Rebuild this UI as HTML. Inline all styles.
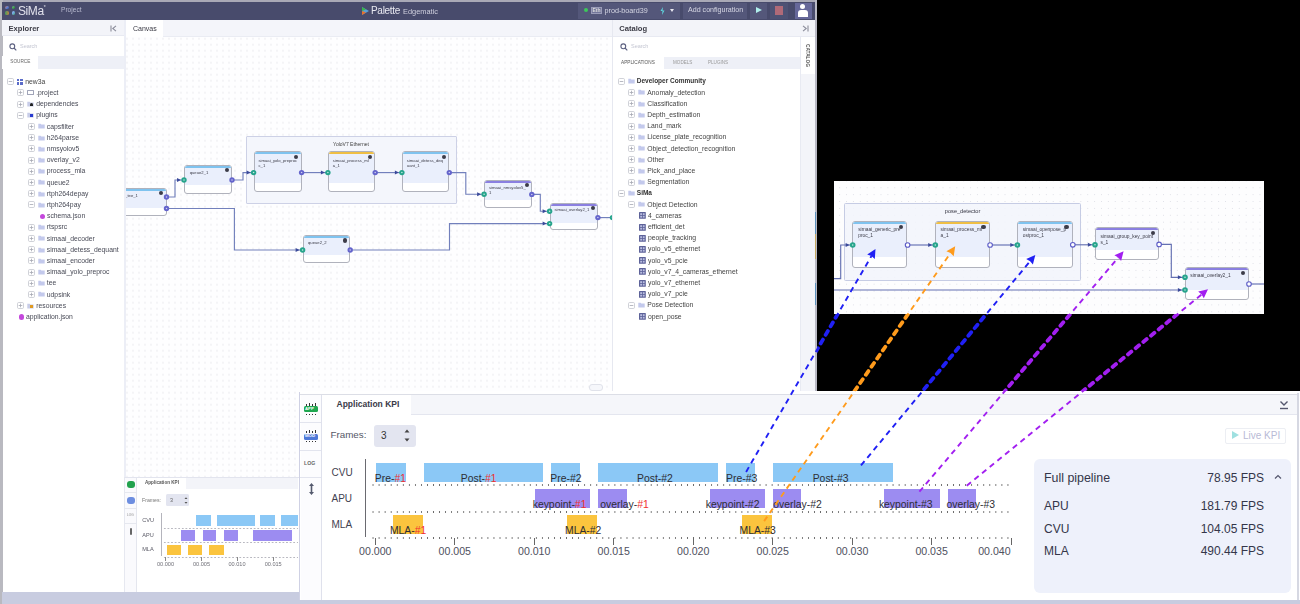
<!DOCTYPE html><html><head><meta charset="utf-8"><style>
*{margin:0;padding:0;box-sizing:border-box}
html,body{width:1300px;height:604px;overflow:hidden;background:#000;font-family:"Liberation Sans",sans-serif}
.a{position:absolute}
svg{display:block}
.t{position:absolute;white-space:nowrap;line-height:1}
.dots{background-color:#fefeff;background-image:radial-gradient(circle,#ececf1 0.55px,transparent 0.9px);background-size:6px 6px;background-position:-2px -0.3px}
.dots2{background-color:#fdfdfe;background-image:radial-gradient(circle,#e0e1e8 0.65px,transparent 0.95px);background-size:6.9px 6.9px;background-position:2.2px 3.3px}
.bl{position:absolute;font-size:10.4px;line-height:1;color:#2e2e34;white-space:nowrap}
.tr{position:absolute;white-space:nowrap;font-size:6.8px;color:#484a56;line-height:1}
.exp{position:absolute;width:6px;height:6px;border:0.7px solid #b4b6c0;border-radius:1px;background:#fff}
.fold{position:absolute;width:6px;height:5px;background:#bcc3ea;border-radius:0.6px}
.node{position:absolute;border:1px solid #b0b2bc;border-radius:3px;background:#fff;overflow:hidden}
.node .lt{position:absolute;left:0;top:0;right:0;background:#eaeffc}
.node .st{position:absolute;left:0;top:0;right:0;height:2px}
.ntx{position:absolute;font-size:5.3px;line-height:6.2px;color:#3a3a46;white-space:nowrap}
</style></head><body>
<div class="a" style="left:0;top:0;width:817px;height:604px;background:#fff;overflow:hidden;filter:blur(0.4px)">
<div class="a" style="left:0;top:0;width:817px;height:2px;background:#a9a9b6"></div>
<div class="a" style="left:0;top:0;width:2.5px;height:604px;background:#b9b9c0"></div>
<div class="a" style="left:815px;top:0;width:2px;height:392px;background:#b9b9c4"></div>
<div class="a" style="left:815.3px;top:211.5px;width:1.2px;height:22.5px;background:#5a90bc"></div>
<div class="a" style="left:815.3px;top:234px;width:1.2px;height:25px;background:#c4a860"></div>
<div class="a" style="left:815.3px;top:282.5px;width:1.2px;height:22.5px;background:#5a90bc"></div>
<div class="a" style="left:2px;top:2px;width:813px;height:18px;background:#484b6c"></div>
<div class="a" style="left:5.4px;top:5.7px;width:3.8px;height:3.8px;border-radius:1.6px;background:linear-gradient(135deg,#c07060,#6080d0 55%,#3050a0)"></div>
<div class="a" style="left:11.6px;top:5.7px;width:3.8px;height:3.8px;border-radius:1.6px;background:linear-gradient(135deg,#70c080,#40a050 60%,#206030)"></div>
<div class="a" style="left:5.4px;top:11.4px;width:3.8px;height:3.8px;border-radius:1.6px;background:linear-gradient(90deg,#40a060,#c08040)"></div>
<div class="a" style="left:11.6px;top:11.4px;width:3.8px;height:3.8px;border-radius:1.6px;background:linear-gradient(135deg,#90c0f0,#70a8e0 50%,#40a050)"></div>
<div class="t" style="left:18px;top:5px;font-size:12px;color:#e2e2ec;letter-spacing:-0.4px">SiMa<span style="font-size:5px;vertical-align:top">*</span></div>
<div class="t" style="left:61px;top:7px;font-size:6.6px;color:#b9bbd0">Project</div>
<div class="a" style="left:361px;top:6px"><svg width="9" height="10"><path d="M1 1 L8 5 L1 9 Z" fill="#5aa0d8"/><path d="M1 1 L5 3.5 L1 5 Z" fill="#39b54a"/><path d="M1 5 L5 6.5 L1 9 Z" fill="#e8702a"/></svg></div>
<div class="t" style="left:371px;top:5.5px;font-size:10px;color:#e8e8f0;letter-spacing:-0.3px">Palette</div>
<div class="t" style="left:403px;top:8px;font-size:7.4px;color:#d0d0de">Edgematic</div>
<div class="a" style="left:577.5px;top:3px;width:102.5px;height:15.5px;background:#54577a"></div>
<div class="a" style="left:583.5px;top:8px;width:4px;height:4px;border-radius:2px;background:#3cc85a"></div>
<div class="a" style="left:591px;top:6.5px;width:10.5px;height:7.5px;background:#73769a;border:0.6px solid #9a9cb8"></div>
<div class="t" style="left:592.5px;top:8px;font-size:5px;color:#ddd;font-weight:bold">Eth</div>
<div class="t" style="left:604.5px;top:6.5px;font-size:7.2px;color:#d6d7e4">prod-board39</div>
<div class="a" style="left:660px;top:6.5px"><svg width="5" height="8"><path d="M3 0 L0.5 4 L2.5 4 L2 8 L4.5 3.5 L2.5 3.5 Z" fill="#5fd8e0"/></svg></div>
<div class="a" style="left:669.5px;top:8.5px;width:0;height:0;border-top:3.5px solid #e8e8f0;border-left:2.5px solid transparent;border-right:2.5px solid transparent"></div>
<div class="a" style="left:683px;top:3px;width:64px;height:15.5px;background:#54577a"></div>
<div class="t" style="left:688px;top:6.5px;font-size:7.1px;color:#d6d7e4">Add configuration</div>
<div class="a" style="left:750px;top:3px;width:17px;height:15.5px;background:#54577a"></div>
<div class="a" style="left:756px;top:7px;width:0;height:0;border-left:6px solid #b0f0ec;border-top:3.7px solid transparent;border-bottom:3.7px solid transparent"></div>
<div class="a" style="left:770px;top:3px;width:18px;height:15.5px;background:#4e5274"></div>
<div class="a" style="left:775px;top:6px;width:8px;height:8.5px;background:#b06a78"></div>
<div class="a" style="left:794.5px;top:2.5px;width:17px;height:16px;background:#66689a"></div>
<div class="a" style="left:800px;top:4px;width:5px;height:5px;border-radius:2.5px;background:#fff"></div>
<div class="a" style="left:797.5px;top:10px;width:10px;height:7px;border-radius:3px 3px 0 0;background:#fff"></div>
<div class="a" style="left:2px;top:20px;width:122px;height:16px;background:#f3f4f9;border-bottom:1px solid #e8eaf2"></div>
<div class="t" style="left:8.5px;top:24.8px;font-size:7.6px;font-weight:bold;color:#3c3c46">Explorer</div>
<svg class="a" style="left:109.5px;top:25px" width="7" height="7"><path d="M1 0.5 V6.5 M6 0.8 L2.8 3.5 L6 6.2" stroke="#8a8c9a" stroke-width="1.1" fill="none"/></svg>
<div class="a" style="left:124px;top:20px;width:2px;height:572px;background:#eceef6"></div>
<div class="a" style="left:9px;top:43px"><svg width="8" height="8"><circle cx="3.3" cy="3.3" r="2.4" stroke="#5c6080" stroke-width="1.1" fill="none"/><path d="M5 5 L7.3 7.3" stroke="#5c6080" stroke-width="1.2"/></svg></div>
<div class="t" style="left:20px;top:44px;font-size:5.5px;color:#c4c6d2">Search</div>
<div class="a" style="left:2px;top:55.5px;width:122px;height:13.5px;background:#eef0f7"></div>
<div class="a" style="left:2px;top:55.5px;width:36px;height:13.5px;background:#fff"></div>
<div class="t" style="left:10.3px;top:60px;font-size:4.7px;color:#666">SOURCE</div>
<svg class="a" style="left:6.8px;top:78.1px" width="7" height="7"><rect x="0.5" y="0.5" width="6" height="6" rx="1.2" fill="#fff" stroke="#c4c6ce" stroke-width="0.8"/><path d="M1.7 3.5 H5.3" stroke="#a6a8b2" stroke-width="0.8"/></svg>
<div class="a" style="left:16.5px;top:78.6px;width:2.8px;height:2.8px;background:#5b6cc8"></div>
<div class="a" style="left:20px;top:78.6px;width:2.8px;height:2.8px;background:#5b6cc8"></div>
<div class="a" style="left:16.5px;top:82.1px;width:2.8px;height:2.8px;background:#5b6cc8"></div>
<div class="a" style="left:20px;top:82.1px;width:2.8px;height:2.8px;background:#5b6cc8"></div>
<div class="tr" style="left:25.2px;top:78.69999999999999px;color:#444">new3a</div>
<svg class="a" style="left:17px;top:89.3px" width="7" height="7"><rect x="0.5" y="0.5" width="6" height="6" rx="1.2" fill="#fff" stroke="#c4c6ce" stroke-width="0.8"/><path d="M1.7 3.5 H5.3" stroke="#a6a8b2" stroke-width="0.8"/><path d="M3.5 1.7 V5.3" stroke="#a6a8b2" stroke-width="0.8"/></svg>
<div class="a" style="left:27px;top:90.3px;width:6.5px;height:5px;border:0.7px solid #a0a4b8;border-radius:0.6px"></div>
<div class="tr" style="left:36.2px;top:89.89999999999999px">.project</div>
<svg class="a" style="left:17px;top:100.5px" width="7" height="7"><rect x="0.5" y="0.5" width="6" height="6" rx="1.2" fill="#fff" stroke="#c4c6ce" stroke-width="0.8"/><path d="M1.7 3.5 H5.3" stroke="#a6a8b2" stroke-width="0.8"/><path d="M3.5 1.7 V5.3" stroke="#a6a8b2" stroke-width="0.8"/></svg>
<svg class="a" style="left:27px;top:101.0px" width="7" height="6"><path d="M0.3 0.8 H2.6 L3.3 1.6 H6.7 V5.6 H0.3 Z" fill="#c8cde8"/></svg>
<div class="a" style="left:29.5px;top:102.5px;width:3px;height:3.5px;background:#222;border-radius:1.5px 1.5px 0 0"></div>
<div class="tr" style="left:36.2px;top:101.1px">dependencies</div>
<svg class="a" style="left:17px;top:111.69999999999999px" width="7" height="7"><rect x="0.5" y="0.5" width="6" height="6" rx="1.2" fill="#fff" stroke="#c4c6ce" stroke-width="0.8"/><path d="M1.7 3.5 H5.3" stroke="#a6a8b2" stroke-width="0.8"/></svg>
<svg class="a" style="left:27px;top:112.19999999999999px" width="7" height="6"><path d="M0.3 0.8 H2.6 L3.3 1.6 H6.7 V5.6 H0.3 Z" fill="#c8cde8"/></svg>
<div class="a" style="left:30px;top:114.19999999999999px;width:3px;height:3px;background:#2a3cd0"></div>
<div class="tr" style="left:36.2px;top:112.29999999999998px">plugins</div>
<svg class="a" style="left:28px;top:122.89999999999999px" width="7" height="7"><rect x="0.5" y="0.5" width="6" height="6" rx="1.2" fill="#fff" stroke="#c4c6ce" stroke-width="0.8"/><path d="M1.7 3.5 H5.3" stroke="#a6a8b2" stroke-width="0.8"/><path d="M3.5 1.7 V5.3" stroke="#a6a8b2" stroke-width="0.8"/></svg>
<svg class="a" style="left:38.3px;top:123.39999999999999px" width="7" height="6"><path d="M0.3 0.8 H2.6 L3.3 1.6 H6.7 V5.6 H0.3 Z" fill="#c3c9ec"/></svg>
<div class="tr" style="left:46.8px;top:123.49999999999999px">capsfilter</div>
<svg class="a" style="left:28px;top:134.1px" width="7" height="7"><rect x="0.5" y="0.5" width="6" height="6" rx="1.2" fill="#fff" stroke="#c4c6ce" stroke-width="0.8"/><path d="M1.7 3.5 H5.3" stroke="#a6a8b2" stroke-width="0.8"/><path d="M3.5 1.7 V5.3" stroke="#a6a8b2" stroke-width="0.8"/></svg>
<svg class="a" style="left:38.3px;top:134.6px" width="7" height="6"><path d="M0.3 0.8 H2.6 L3.3 1.6 H6.7 V5.6 H0.3 Z" fill="#c3c9ec"/></svg>
<div class="tr" style="left:46.8px;top:134.7px">h264parse</div>
<svg class="a" style="left:28px;top:145.29999999999998px" width="7" height="7"><rect x="0.5" y="0.5" width="6" height="6" rx="1.2" fill="#fff" stroke="#c4c6ce" stroke-width="0.8"/><path d="M1.7 3.5 H5.3" stroke="#a6a8b2" stroke-width="0.8"/><path d="M3.5 1.7 V5.3" stroke="#a6a8b2" stroke-width="0.8"/></svg>
<svg class="a" style="left:38.3px;top:145.79999999999998px" width="7" height="6"><path d="M0.3 0.8 H2.6 L3.3 1.6 H6.7 V5.6 H0.3 Z" fill="#c3c9ec"/></svg>
<div class="tr" style="left:46.8px;top:145.89999999999998px">nmsyolov5</div>
<svg class="a" style="left:28px;top:156.5px" width="7" height="7"><rect x="0.5" y="0.5" width="6" height="6" rx="1.2" fill="#fff" stroke="#c4c6ce" stroke-width="0.8"/><path d="M1.7 3.5 H5.3" stroke="#a6a8b2" stroke-width="0.8"/><path d="M3.5 1.7 V5.3" stroke="#a6a8b2" stroke-width="0.8"/></svg>
<svg class="a" style="left:38.3px;top:157.0px" width="7" height="6"><path d="M0.3 0.8 H2.6 L3.3 1.6 H6.7 V5.6 H0.3 Z" fill="#c3c9ec"/></svg>
<div class="tr" style="left:46.8px;top:157.1px">overlay_v2</div>
<svg class="a" style="left:28px;top:167.7px" width="7" height="7"><rect x="0.5" y="0.5" width="6" height="6" rx="1.2" fill="#fff" stroke="#c4c6ce" stroke-width="0.8"/><path d="M1.7 3.5 H5.3" stroke="#a6a8b2" stroke-width="0.8"/><path d="M3.5 1.7 V5.3" stroke="#a6a8b2" stroke-width="0.8"/></svg>
<svg class="a" style="left:38.3px;top:168.2px" width="7" height="6"><path d="M0.3 0.8 H2.6 L3.3 1.6 H6.7 V5.6 H0.3 Z" fill="#c3c9ec"/></svg>
<div class="tr" style="left:46.8px;top:168.29999999999998px">process_mla</div>
<svg class="a" style="left:28px;top:178.89999999999998px" width="7" height="7"><rect x="0.5" y="0.5" width="6" height="6" rx="1.2" fill="#fff" stroke="#c4c6ce" stroke-width="0.8"/><path d="M1.7 3.5 H5.3" stroke="#a6a8b2" stroke-width="0.8"/><path d="M3.5 1.7 V5.3" stroke="#a6a8b2" stroke-width="0.8"/></svg>
<svg class="a" style="left:38.3px;top:179.39999999999998px" width="7" height="6"><path d="M0.3 0.8 H2.6 L3.3 1.6 H6.7 V5.6 H0.3 Z" fill="#c3c9ec"/></svg>
<div class="tr" style="left:46.8px;top:179.49999999999997px">queue2</div>
<svg class="a" style="left:28px;top:190.1px" width="7" height="7"><rect x="0.5" y="0.5" width="6" height="6" rx="1.2" fill="#fff" stroke="#c4c6ce" stroke-width="0.8"/><path d="M1.7 3.5 H5.3" stroke="#a6a8b2" stroke-width="0.8"/><path d="M3.5 1.7 V5.3" stroke="#a6a8b2" stroke-width="0.8"/></svg>
<svg class="a" style="left:38.3px;top:190.6px" width="7" height="6"><path d="M0.3 0.8 H2.6 L3.3 1.6 H6.7 V5.6 H0.3 Z" fill="#c3c9ec"/></svg>
<div class="tr" style="left:46.8px;top:190.7px">rtph264depay</div>
<svg class="a" style="left:28px;top:201.29999999999998px" width="7" height="7"><rect x="0.5" y="0.5" width="6" height="6" rx="1.2" fill="#fff" stroke="#c4c6ce" stroke-width="0.8"/><path d="M1.7 3.5 H5.3" stroke="#a6a8b2" stroke-width="0.8"/></svg>
<svg class="a" style="left:38.3px;top:201.79999999999998px" width="7" height="6"><path d="M0.3 0.8 H2.6 L3.3 1.6 H6.7 V5.6 H0.3 Z" fill="#c3c9ec"/></svg>
<div class="tr" style="left:46.8px;top:201.89999999999998px">rtph264pay</div>
<div class="a" style="left:39.5px;top:213.49999999999997px;width:5px;height:5.5px;background:#c448dc;border-radius:2.5px"></div>
<div class="tr" style="left:47px;top:213.09999999999997px">schema.json</div>
<svg class="a" style="left:28px;top:223.7px" width="7" height="7"><rect x="0.5" y="0.5" width="6" height="6" rx="1.2" fill="#fff" stroke="#c4c6ce" stroke-width="0.8"/><path d="M1.7 3.5 H5.3" stroke="#a6a8b2" stroke-width="0.8"/><path d="M3.5 1.7 V5.3" stroke="#a6a8b2" stroke-width="0.8"/></svg>
<svg class="a" style="left:38.3px;top:224.2px" width="7" height="6"><path d="M0.3 0.8 H2.6 L3.3 1.6 H6.7 V5.6 H0.3 Z" fill="#c3c9ec"/></svg>
<div class="tr" style="left:46.8px;top:224.29999999999998px">rtspsrc</div>
<svg class="a" style="left:28px;top:234.89999999999998px" width="7" height="7"><rect x="0.5" y="0.5" width="6" height="6" rx="1.2" fill="#fff" stroke="#c4c6ce" stroke-width="0.8"/><path d="M1.7 3.5 H5.3" stroke="#a6a8b2" stroke-width="0.8"/><path d="M3.5 1.7 V5.3" stroke="#a6a8b2" stroke-width="0.8"/></svg>
<svg class="a" style="left:38.3px;top:235.39999999999998px" width="7" height="6"><path d="M0.3 0.8 H2.6 L3.3 1.6 H6.7 V5.6 H0.3 Z" fill="#c3c9ec"/></svg>
<div class="tr" style="left:46.8px;top:235.49999999999997px">simaai_decoder</div>
<svg class="a" style="left:28px;top:246.1px" width="7" height="7"><rect x="0.5" y="0.5" width="6" height="6" rx="1.2" fill="#fff" stroke="#c4c6ce" stroke-width="0.8"/><path d="M1.7 3.5 H5.3" stroke="#a6a8b2" stroke-width="0.8"/><path d="M3.5 1.7 V5.3" stroke="#a6a8b2" stroke-width="0.8"/></svg>
<svg class="a" style="left:38.3px;top:246.6px" width="7" height="6"><path d="M0.3 0.8 H2.6 L3.3 1.6 H6.7 V5.6 H0.3 Z" fill="#c3c9ec"/></svg>
<div class="tr" style="left:46.8px;top:246.7px">simaai_detess_dequant</div>
<svg class="a" style="left:28px;top:257.29999999999995px" width="7" height="7"><rect x="0.5" y="0.5" width="6" height="6" rx="1.2" fill="#fff" stroke="#c4c6ce" stroke-width="0.8"/><path d="M1.7 3.5 H5.3" stroke="#a6a8b2" stroke-width="0.8"/><path d="M3.5 1.7 V5.3" stroke="#a6a8b2" stroke-width="0.8"/></svg>
<svg class="a" style="left:38.3px;top:257.79999999999995px" width="7" height="6"><path d="M0.3 0.8 H2.6 L3.3 1.6 H6.7 V5.6 H0.3 Z" fill="#c3c9ec"/></svg>
<div class="tr" style="left:46.8px;top:257.9px">simaai_encoder</div>
<svg class="a" style="left:28px;top:268.5px" width="7" height="7"><rect x="0.5" y="0.5" width="6" height="6" rx="1.2" fill="#fff" stroke="#c4c6ce" stroke-width="0.8"/><path d="M1.7 3.5 H5.3" stroke="#a6a8b2" stroke-width="0.8"/><path d="M3.5 1.7 V5.3" stroke="#a6a8b2" stroke-width="0.8"/></svg>
<svg class="a" style="left:38.3px;top:269.0px" width="7" height="6"><path d="M0.3 0.8 H2.6 L3.3 1.6 H6.7 V5.6 H0.3 Z" fill="#c3c9ec"/></svg>
<div class="tr" style="left:46.8px;top:269.1px">simaai_yolo_preproc</div>
<svg class="a" style="left:28px;top:279.7px" width="7" height="7"><rect x="0.5" y="0.5" width="6" height="6" rx="1.2" fill="#fff" stroke="#c4c6ce" stroke-width="0.8"/><path d="M1.7 3.5 H5.3" stroke="#a6a8b2" stroke-width="0.8"/><path d="M3.5 1.7 V5.3" stroke="#a6a8b2" stroke-width="0.8"/></svg>
<svg class="a" style="left:38.3px;top:280.2px" width="7" height="6"><path d="M0.3 0.8 H2.6 L3.3 1.6 H6.7 V5.6 H0.3 Z" fill="#c3c9ec"/></svg>
<div class="tr" style="left:46.8px;top:280.3px">tee</div>
<svg class="a" style="left:28px;top:290.9px" width="7" height="7"><rect x="0.5" y="0.5" width="6" height="6" rx="1.2" fill="#fff" stroke="#c4c6ce" stroke-width="0.8"/><path d="M1.7 3.5 H5.3" stroke="#a6a8b2" stroke-width="0.8"/><path d="M3.5 1.7 V5.3" stroke="#a6a8b2" stroke-width="0.8"/></svg>
<svg class="a" style="left:38.3px;top:291.4px" width="7" height="6"><path d="M0.3 0.8 H2.6 L3.3 1.6 H6.7 V5.6 H0.3 Z" fill="#c3c9ec"/></svg>
<div class="tr" style="left:46.8px;top:291.5px">udpsink</div>
<svg class="a" style="left:17px;top:302.1px" width="7" height="7"><rect x="0.5" y="0.5" width="6" height="6" rx="1.2" fill="#fff" stroke="#c4c6ce" stroke-width="0.8"/><path d="M1.7 3.5 H5.3" stroke="#a6a8b2" stroke-width="0.8"/><path d="M3.5 1.7 V5.3" stroke="#a6a8b2" stroke-width="0.8"/></svg>
<svg class="a" style="left:27px;top:302.6px" width="7" height="6"><path d="M0.3 0.8 H2.6 L3.3 1.6 H6.7 V5.6 H0.3 Z" fill="#c8cde8"/></svg>
<div class="a" style="left:30px;top:304.6px;width:3px;height:3px;background:#e09a20"></div>
<div class="tr" style="left:36.2px;top:302.70000000000005px">resources</div>
<div class="a" style="left:19px;top:314.29999999999995px;width:5px;height:5.5px;background:#c448dc;border-radius:2.5px"></div>
<div class="tr" style="left:26px;top:313.9px">application.json</div>
<div class="a dots" style="left:126px;top:36px;width:487px;height:441px"></div>
<div class="a" style="left:126px;top:20px;width:487px;height:16.5px;background:#f4f5fa;border-bottom:1px solid #eaecf3"></div>
<div class="a" style="left:126px;top:20px;width:37px;height:17px;background:#fff"></div>
<div class="t" style="left:133px;top:25px;font-size:7px;color:#3a3a44">Canvas</div>
<div class="a" style="left:589px;top:384px;width:14px;height:7px;border:0.7px solid #e0e2ea;border-radius:3px;background:#f6f7fb"></div>
<div class="a" style="left:126px;top:37px;width:487px;height:440px;overflow:hidden">
<div class="a" style="left:120.0px;top:99.0px;width:211px;height:67.5px;border:1px solid #cdd1e6;background:rgba(243,245,252,0.92);border-radius:1px"></div>
<div class="t" style="left:207.0px;top:104.8px;font-size:5px;color:#444">YoloV7 Ethernet</div>
<div class="node" style="left:-16.0px;top:150.8px;width:56.9px;height:28.3px"><div class="lt" style="height:18.9px"></div><div class="st" style="background:#7fc3ef"></div></div>
<div class="ntx" style="left:-13.0px;top:155.9px;font-size:4.2px;line-height:6.2px">simaai_tee_1</div>
<div class="a" style="left:33.3px;top:154.2px;width:4.2px;height:4.2px;border-radius:50%;background:#3c3c48"></div>
<div class="node" style="left:58.0px;top:128.0px;width:48.0px;height:28.7px"><div class="lt" style="height:18.6px"></div><div class="st" style="background:#7fc3ef"></div></div>
<div class="ntx" style="left:63.7px;top:133.4px;font-size:4.2px;line-height:6.2px">queue2_1</div>
<div class="a" style="left:98.9px;top:131.1px;width:4.2px;height:4.2px;border-radius:50%;background:#3c3c48"></div>
<div class="node" style="left:127.6px;top:114.4px;width:48.0px;height:40.8px"><div class="lt" style="height:30.9px"></div><div class="st" style="background:#7fc3ef"></div></div>
<div class="ntx" style="left:132.5px;top:120.8px;font-size:4.2px;line-height:5.1px">simaai_yolo_preproc</div>
<div class="ntx" style="left:132.5px;top:125.9px;font-size:4.2px;line-height:5.1px">c_1</div>
<div class="a" style="left:168.2px;top:118.0px;width:4.2px;height:4.2px;border-radius:50%;background:#3c3c48"></div>
<div class="node" style="left:201.9px;top:114.4px;width:47.3px;height:40.8px"><div class="lt" style="height:30.9px"></div><div class="st" style="background:#efbf45"></div></div>
<div class="ntx" style="left:206.8px;top:120.8px;font-size:4.2px;line-height:5.1px">simaai_process_ml</div>
<div class="ntx" style="left:206.8px;top:125.9px;font-size:4.2px;line-height:5.1px">a_1</div>
<div class="a" style="left:241.9px;top:118.0px;width:4.2px;height:4.2px;border-radius:50%;background:#3c3c48"></div>
<div class="node" style="left:275.9px;top:114.4px;width:47.4px;height:40.8px"><div class="lt" style="height:30.9px"></div><div class="st" style="background:#7fc3ef"></div></div>
<div class="ntx" style="left:280.8px;top:120.8px;font-size:4.2px;line-height:5.1px">simaai_detess_deq</div>
<div class="ntx" style="left:280.8px;top:125.9px;font-size:4.2px;line-height:5.1px">uant_1</div>
<div class="a" style="left:315.9px;top:118.0px;width:4.2px;height:4.2px;border-radius:50%;background:#3c3c48"></div>
<div class="node" style="left:176.6px;top:198.2px;width:47.6px;height:28.3px"><div class="lt" style="height:18.8px"></div><div class="st" style="background:#7fc3ef"></div></div>
<div class="ntx" style="left:182.0px;top:203.4px;font-size:4.2px;line-height:6.2px">queue2_2</div>
<div class="a" style="left:216.9px;top:201.4px;width:4.2px;height:4.2px;border-radius:50%;background:#3c3c48"></div>
<div class="node" style="left:358.1px;top:142.9px;width:47.7px;height:27.8px"><div class="lt" style="height:18.8px"></div><div class="st" style="background:#8a7fe0"></div></div>
<div class="ntx" style="left:363.0px;top:147.9px;font-size:4.2px;line-height:5.1px">simaai_nmsyolov5_</div>
<div class="ntx" style="left:363.0px;top:153.0px;font-size:4.2px;line-height:5.1px">1</div>
<div class="a" style="left:398.9px;top:145.9px;width:4.2px;height:4.2px;border-radius:50%;background:#3c3c48"></div>
<div class="node" style="left:423.6px;top:165.7px;width:48.3px;height:27.8px"><div class="lt" style="height:18.9px"></div><div class="st" style="background:#8a7fe0"></div></div>
<div class="ntx" style="left:428.5px;top:170.4px;font-size:4.2px;line-height:6.2px">simaai_overlay2_1</div>
<div class="a" style="left:464.9px;top:168.9px;width:4.2px;height:4.2px;border-radius:50%;background:#3c3c48"></div>
<svg class="a" style="left:0.0px;top:0.0px" width="487" height="440"><polyline points="40.5,160.0 49.0,160.0 49.0,143.0 58.0,143.0" fill="none" stroke="#7280bc" stroke-width="1.15"/><path d="M51.0,141.0 L55.0,143.0 L51.0,145.0 Z" fill="#3b4a9a"/><polyline points="106.0,143.0 117.0,143.0 117.0,135.6 127.6,135.6" fill="none" stroke="#7280bc" stroke-width="1.15"/><path d="M120.6,133.6 L124.6,135.6 L120.6,137.6 Z" fill="#3b4a9a"/><polyline points="175.6,135.6 201.9,135.6" fill="none" stroke="#7280bc" stroke-width="1.15"/><path d="M194.9,133.6 L198.9,135.6 L194.9,137.6 Z" fill="#3b4a9a"/><polyline points="249.2,135.6 275.9,135.6" fill="none" stroke="#7280bc" stroke-width="1.15"/><path d="M268.9,133.6 L272.9,135.6 L268.9,137.6 Z" fill="#3b4a9a"/><polyline points="323.3,135.6 339.8,135.6 339.8,157.2 358.1,157.2" fill="none" stroke="#7280bc" stroke-width="1.15"/><path d="M351.1,155.2 L355.1,157.2 L351.1,159.2 Z" fill="#3b4a9a"/><polyline points="405.8,157.4 414.3,157.4 414.3,174.2 423.6,174.2" fill="none" stroke="#7280bc" stroke-width="1.15"/><path d="M416.6,172.2 L420.6,174.2 L416.6,176.2 Z" fill="#3b4a9a"/><polyline points="40.5,171.5 108.4,171.5 108.4,213.0 176.6,213.0" fill="none" stroke="#7280bc" stroke-width="1.15"/><path d="M169.6,211.0 L173.6,213.0 L169.6,215.0 Z" fill="#3b4a9a"/><polyline points="224.2,213.0 323.5,213.0 323.5,186.6 423.6,186.6" fill="none" stroke="#7280bc" stroke-width="1.15"/><path d="M416.6,184.6 L420.6,186.6 L416.6,188.6 Z" fill="#3b4a9a"/><polyline points="471.9,180.6 486.0,180.6" fill="none" stroke="#7280bc" stroke-width="1.15"/><circle cx="58.0" cy="143.0" r="2.7" fill="#26a48c"/><circle cx="58.0" cy="143.0" r="0.76" fill="#c8ebe2"/><circle cx="127.6" cy="135.6" r="2.7" fill="#26a48c"/><circle cx="127.6" cy="135.6" r="0.76" fill="#c8ebe2"/><circle cx="201.9" cy="135.6" r="2.7" fill="#26a48c"/><circle cx="201.9" cy="135.6" r="0.76" fill="#c8ebe2"/><circle cx="275.9" cy="135.6" r="2.7" fill="#26a48c"/><circle cx="275.9" cy="135.6" r="0.76" fill="#c8ebe2"/><circle cx="358.1" cy="157.2" r="2.7" fill="#26a48c"/><circle cx="358.1" cy="157.2" r="0.76" fill="#c8ebe2"/><circle cx="423.6" cy="174.2" r="2.7" fill="#26a48c"/><circle cx="423.6" cy="174.2" r="0.76" fill="#c8ebe2"/><circle cx="423.6" cy="186.6" r="2.7" fill="#26a48c"/><circle cx="423.6" cy="186.6" r="0.76" fill="#c8ebe2"/><circle cx="176.6" cy="213.0" r="2.7" fill="#26a48c"/><circle cx="176.6" cy="213.0" r="0.76" fill="#c8ebe2"/><circle cx="486.5" cy="180.6" r="2.7" fill="#26a48c"/><circle cx="486.5" cy="180.6" r="0.76" fill="#c8ebe2"/><circle cx="40.5" cy="160.0" r="2.7" fill="#6464cc"/><circle cx="40.5" cy="160.0" r="0.76" fill="#d0d0f0"/><circle cx="40.5" cy="171.5" r="2.7" fill="#6464cc"/><circle cx="40.5" cy="171.5" r="0.76" fill="#d0d0f0"/><circle cx="106.0" cy="143.0" r="2.7" fill="#6464cc"/><circle cx="106.0" cy="143.0" r="0.76" fill="#d0d0f0"/><circle cx="175.6" cy="135.6" r="2.7" fill="#6464cc"/><circle cx="175.6" cy="135.6" r="0.76" fill="#d0d0f0"/><circle cx="249.2" cy="135.6" r="2.7" fill="#6464cc"/><circle cx="249.2" cy="135.6" r="0.76" fill="#d0d0f0"/><circle cx="323.3" cy="135.6" r="2.7" fill="#6464cc"/><circle cx="323.3" cy="135.6" r="0.76" fill="#d0d0f0"/><circle cx="405.8" cy="157.4" r="2.7" fill="#6464cc"/><circle cx="405.8" cy="157.4" r="0.76" fill="#d0d0f0"/><circle cx="471.9" cy="180.6" r="2.7" fill="#6464cc"/><circle cx="471.9" cy="180.6" r="0.76" fill="#d0d0f0"/><circle cx="224.2" cy="213.0" r="2.7" fill="#6464cc"/><circle cx="224.2" cy="213.0" r="0.76" fill="#d0d0f0"/></svg>
</div>
<div class="a" style="left:612px;top:20px;width:203px;height:373px;background:#fff;border-left:1px solid #e6e8f0"></div>
<div class="a" style="left:613px;top:20px;width:202px;height:16.5px;background:#f3f4f9;border-bottom:1px solid #e8eaf2"></div>
<div class="t" style="left:619.3px;top:24.5px;font-size:7.6px;font-weight:bold;color:#3c3c46">Catalog</div>
<svg class="a" style="left:801.5px;top:25px" width="7" height="7"><path d="M6 0.5 V6.5 M1 0.8 L4.2 3.5 L1 6.2" stroke="#8a8c9a" stroke-width="1.1" fill="none"/></svg>
<div class="a" style="left:620px;top:43px"><svg width="8" height="8"><circle cx="3.3" cy="3.3" r="2.4" stroke="#5c6080" stroke-width="1.1" fill="none"/><path d="M5 5 L7.3 7.3" stroke="#5c6080" stroke-width="1.2"/></svg></div>
<div class="t" style="left:631px;top:44px;font-size:5.5px;color:#c4c6d2">Search</div>
<div class="a" style="left:613px;top:56.7px;width:187px;height:12px;background:#eef0f7"></div>
<div class="a" style="left:613px;top:56.7px;width:51px;height:12px;background:#fff"></div>
<div class="t" style="left:621px;top:60.5px;font-size:4.7px;color:#555">APPLICATIONS</div>
<div class="t" style="left:673px;top:60.5px;font-size:4.6px;color:#999">MODELS</div>
<div class="t" style="left:708px;top:60.5px;font-size:4.6px;color:#999">PLUGINS</div>
<div class="a" style="left:800px;top:36.5px;width:15px;height:356px;background:#f3f4f9;border-left:1px solid #e8eaf2"></div>
<div class="a" style="left:800px;top:36.5px;width:15px;height:37.5px;background:#fff;border-left:1px solid #e8eaf2"></div>
<div class="t" style="left:804px;top:43.5px;font-size:4.8px;color:#555;writing-mode:vertical-rl;font-weight:bold">CATALOG</div>
<svg class="a" style="left:617.8px;top:77.7px" width="7" height="7"><rect x="0.5" y="0.5" width="6" height="6" rx="1.2" fill="#fff" stroke="#c4c6ce" stroke-width="0.8"/><path d="M1.7 3.5 H5.3" stroke="#a6a8b2" stroke-width="0.8"/></svg>
<svg class="a" style="left:627.8px;top:78.2px" width="7" height="6"><path d="M0.3 0.8 H2.6 L3.3 1.6 H6.7 V5.6 H0.3 Z" fill="#c3c9ec"/></svg>
<div class="tr" style="left:636.8px;top:78.4px;color:#333;font-weight:bold;font-size:6.5px">Developer Community</div>
<svg class="a" style="left:628.3px;top:88.9px" width="7" height="7"><rect x="0.5" y="0.5" width="6" height="6" rx="1.2" fill="#fff" stroke="#c4c6ce" stroke-width="0.8"/><path d="M1.7 3.5 H5.3" stroke="#a6a8b2" stroke-width="0.8"/><path d="M3.5 1.7 V5.3" stroke="#a6a8b2" stroke-width="0.8"/></svg>
<svg class="a" style="left:638.3px;top:89.4px" width="7" height="6"><path d="M0.3 0.8 H2.6 L3.3 1.6 H6.7 V5.6 H0.3 Z" fill="#c3c9ec"/></svg>
<div class="tr" style="left:647.3px;top:89.5px;color:#444">Anomaly_detection</div>
<svg class="a" style="left:628.3px;top:100.1px" width="7" height="7"><rect x="0.5" y="0.5" width="6" height="6" rx="1.2" fill="#fff" stroke="#c4c6ce" stroke-width="0.8"/><path d="M1.7 3.5 H5.3" stroke="#a6a8b2" stroke-width="0.8"/><path d="M3.5 1.7 V5.3" stroke="#a6a8b2" stroke-width="0.8"/></svg>
<svg class="a" style="left:638.3px;top:100.6px" width="7" height="6"><path d="M0.3 0.8 H2.6 L3.3 1.6 H6.7 V5.6 H0.3 Z" fill="#c3c9ec"/></svg>
<div class="tr" style="left:647.3px;top:100.69999999999999px;color:#444">Classification</div>
<svg class="a" style="left:628.3px;top:111.3px" width="7" height="7"><rect x="0.5" y="0.5" width="6" height="6" rx="1.2" fill="#fff" stroke="#c4c6ce" stroke-width="0.8"/><path d="M1.7 3.5 H5.3" stroke="#a6a8b2" stroke-width="0.8"/><path d="M3.5 1.7 V5.3" stroke="#a6a8b2" stroke-width="0.8"/></svg>
<svg class="a" style="left:638.3px;top:111.8px" width="7" height="6"><path d="M0.3 0.8 H2.6 L3.3 1.6 H6.7 V5.6 H0.3 Z" fill="#c3c9ec"/></svg>
<div class="tr" style="left:647.3px;top:111.89999999999999px;color:#444">Depth_estimation</div>
<svg class="a" style="left:628.3px;top:122.5px" width="7" height="7"><rect x="0.5" y="0.5" width="6" height="6" rx="1.2" fill="#fff" stroke="#c4c6ce" stroke-width="0.8"/><path d="M1.7 3.5 H5.3" stroke="#a6a8b2" stroke-width="0.8"/><path d="M3.5 1.7 V5.3" stroke="#a6a8b2" stroke-width="0.8"/></svg>
<svg class="a" style="left:638.3px;top:123.0px" width="7" height="6"><path d="M0.3 0.8 H2.6 L3.3 1.6 H6.7 V5.6 H0.3 Z" fill="#c3c9ec"/></svg>
<div class="tr" style="left:647.3px;top:123.1px;color:#444">Land_mark</div>
<svg class="a" style="left:628.3px;top:133.7px" width="7" height="7"><rect x="0.5" y="0.5" width="6" height="6" rx="1.2" fill="#fff" stroke="#c4c6ce" stroke-width="0.8"/><path d="M1.7 3.5 H5.3" stroke="#a6a8b2" stroke-width="0.8"/><path d="M3.5 1.7 V5.3" stroke="#a6a8b2" stroke-width="0.8"/></svg>
<svg class="a" style="left:638.3px;top:134.2px" width="7" height="6"><path d="M0.3 0.8 H2.6 L3.3 1.6 H6.7 V5.6 H0.3 Z" fill="#c3c9ec"/></svg>
<div class="tr" style="left:647.3px;top:134.29999999999998px;color:#444">License_plate_recognition</div>
<svg class="a" style="left:628.3px;top:144.89999999999998px" width="7" height="7"><rect x="0.5" y="0.5" width="6" height="6" rx="1.2" fill="#fff" stroke="#c4c6ce" stroke-width="0.8"/><path d="M1.7 3.5 H5.3" stroke="#a6a8b2" stroke-width="0.8"/><path d="M3.5 1.7 V5.3" stroke="#a6a8b2" stroke-width="0.8"/></svg>
<svg class="a" style="left:638.3px;top:145.39999999999998px" width="7" height="6"><path d="M0.3 0.8 H2.6 L3.3 1.6 H6.7 V5.6 H0.3 Z" fill="#c3c9ec"/></svg>
<div class="tr" style="left:647.3px;top:145.49999999999997px;color:#444">Object_detection_recognition</div>
<svg class="a" style="left:628.3px;top:156.1px" width="7" height="7"><rect x="0.5" y="0.5" width="6" height="6" rx="1.2" fill="#fff" stroke="#c4c6ce" stroke-width="0.8"/><path d="M1.7 3.5 H5.3" stroke="#a6a8b2" stroke-width="0.8"/><path d="M3.5 1.7 V5.3" stroke="#a6a8b2" stroke-width="0.8"/></svg>
<svg class="a" style="left:638.3px;top:156.6px" width="7" height="6"><path d="M0.3 0.8 H2.6 L3.3 1.6 H6.7 V5.6 H0.3 Z" fill="#c3c9ec"/></svg>
<div class="tr" style="left:647.3px;top:156.7px;color:#444">Other</div>
<svg class="a" style="left:628.3px;top:167.3px" width="7" height="7"><rect x="0.5" y="0.5" width="6" height="6" rx="1.2" fill="#fff" stroke="#c4c6ce" stroke-width="0.8"/><path d="M1.7 3.5 H5.3" stroke="#a6a8b2" stroke-width="0.8"/><path d="M3.5 1.7 V5.3" stroke="#a6a8b2" stroke-width="0.8"/></svg>
<svg class="a" style="left:638.3px;top:167.8px" width="7" height="6"><path d="M0.3 0.8 H2.6 L3.3 1.6 H6.7 V5.6 H0.3 Z" fill="#c3c9ec"/></svg>
<div class="tr" style="left:647.3px;top:167.9px;color:#444">Pick_and_place</div>
<svg class="a" style="left:628.3px;top:178.5px" width="7" height="7"><rect x="0.5" y="0.5" width="6" height="6" rx="1.2" fill="#fff" stroke="#c4c6ce" stroke-width="0.8"/><path d="M1.7 3.5 H5.3" stroke="#a6a8b2" stroke-width="0.8"/><path d="M3.5 1.7 V5.3" stroke="#a6a8b2" stroke-width="0.8"/></svg>
<svg class="a" style="left:638.3px;top:179.0px" width="7" height="6"><path d="M0.3 0.8 H2.6 L3.3 1.6 H6.7 V5.6 H0.3 Z" fill="#c3c9ec"/></svg>
<div class="tr" style="left:647.3px;top:179.1px;color:#444">Segmentation</div>
<svg class="a" style="left:617.8px;top:189.7px" width="7" height="7"><rect x="0.5" y="0.5" width="6" height="6" rx="1.2" fill="#fff" stroke="#c4c6ce" stroke-width="0.8"/><path d="M1.7 3.5 H5.3" stroke="#a6a8b2" stroke-width="0.8"/></svg>
<svg class="a" style="left:627.8px;top:190.2px" width="7" height="6"><path d="M0.3 0.8 H2.6 L3.3 1.6 H6.7 V5.6 H0.3 Z" fill="#c3c9ec"/></svg>
<div class="tr" style="left:636.8px;top:190.39999999999998px;color:#333;font-weight:bold;font-size:6.5px">SiMa</div>
<svg class="a" style="left:628.3px;top:200.89999999999998px" width="7" height="7"><rect x="0.5" y="0.5" width="6" height="6" rx="1.2" fill="#fff" stroke="#c4c6ce" stroke-width="0.8"/><path d="M1.7 3.5 H5.3" stroke="#a6a8b2" stroke-width="0.8"/></svg>
<svg class="a" style="left:638.3px;top:201.39999999999998px" width="7" height="6"><path d="M0.3 0.8 H2.6 L3.3 1.6 H6.7 V5.6 H0.3 Z" fill="#c3c9ec"/></svg>
<div class="tr" style="left:647.3px;top:201.49999999999997px;color:#444">Object Detection</div>
<svg class="a" style="left:638.6px;top:212.29999999999995px" width="7" height="7"><rect x="0" y="0" width="6.8" height="6.8" rx="0.6" fill="#5d6299"/><rect x="1.2" y="1.2" width="1.8" height="1.8" fill="#b9bde0"/><rect x="3.8" y="1.2" width="1.8" height="1.8" fill="#b9bde0"/><rect x="1.2" y="3.8" width="1.8" height="1.8" fill="#b9bde0"/><rect x="3.8" y="3.8" width="1.8" height="1.8" fill="#b9bde0"/></svg>
<div class="tr" style="left:648px;top:212.69999999999996px;color:#444">4_cameras</div>
<svg class="a" style="left:638.6px;top:223.5px" width="7" height="7"><rect x="0" y="0" width="6.8" height="6.8" rx="0.6" fill="#5d6299"/><rect x="1.2" y="1.2" width="1.8" height="1.8" fill="#b9bde0"/><rect x="3.8" y="1.2" width="1.8" height="1.8" fill="#b9bde0"/><rect x="1.2" y="3.8" width="1.8" height="1.8" fill="#b9bde0"/><rect x="3.8" y="3.8" width="1.8" height="1.8" fill="#b9bde0"/></svg>
<div class="tr" style="left:648px;top:223.9px;color:#444">efficient_det</div>
<svg class="a" style="left:638.6px;top:234.7px" width="7" height="7"><rect x="0" y="0" width="6.8" height="6.8" rx="0.6" fill="#5d6299"/><rect x="1.2" y="1.2" width="1.8" height="1.8" fill="#b9bde0"/><rect x="3.8" y="1.2" width="1.8" height="1.8" fill="#b9bde0"/><rect x="1.2" y="3.8" width="1.8" height="1.8" fill="#b9bde0"/><rect x="3.8" y="3.8" width="1.8" height="1.8" fill="#b9bde0"/></svg>
<div class="tr" style="left:648px;top:235.1px;color:#444">people_tracking</div>
<svg class="a" style="left:638.6px;top:245.89999999999998px" width="7" height="7"><rect x="0" y="0" width="6.8" height="6.8" rx="0.6" fill="#5d6299"/><rect x="1.2" y="1.2" width="1.8" height="1.8" fill="#b9bde0"/><rect x="3.8" y="1.2" width="1.8" height="1.8" fill="#b9bde0"/><rect x="1.2" y="3.8" width="1.8" height="1.8" fill="#b9bde0"/><rect x="3.8" y="3.8" width="1.8" height="1.8" fill="#b9bde0"/></svg>
<div class="tr" style="left:648px;top:246.29999999999998px;color:#444">yolo_v5_ethernet</div>
<svg class="a" style="left:638.6px;top:257.09999999999997px" width="7" height="7"><rect x="0" y="0" width="6.8" height="6.8" rx="0.6" fill="#5d6299"/><rect x="1.2" y="1.2" width="1.8" height="1.8" fill="#b9bde0"/><rect x="3.8" y="1.2" width="1.8" height="1.8" fill="#b9bde0"/><rect x="1.2" y="3.8" width="1.8" height="1.8" fill="#b9bde0"/><rect x="3.8" y="3.8" width="1.8" height="1.8" fill="#b9bde0"/></svg>
<div class="tr" style="left:648px;top:257.5px;color:#444">yolo_v5_pcie</div>
<svg class="a" style="left:638.6px;top:268.29999999999995px" width="7" height="7"><rect x="0" y="0" width="6.8" height="6.8" rx="0.6" fill="#5d6299"/><rect x="1.2" y="1.2" width="1.8" height="1.8" fill="#b9bde0"/><rect x="3.8" y="1.2" width="1.8" height="1.8" fill="#b9bde0"/><rect x="1.2" y="3.8" width="1.8" height="1.8" fill="#b9bde0"/><rect x="3.8" y="3.8" width="1.8" height="1.8" fill="#b9bde0"/></svg>
<div class="tr" style="left:648px;top:268.7px;color:#444">yolo_v7_4_cameras_ethernet</div>
<svg class="a" style="left:638.6px;top:279.5px" width="7" height="7"><rect x="0" y="0" width="6.8" height="6.8" rx="0.6" fill="#5d6299"/><rect x="1.2" y="1.2" width="1.8" height="1.8" fill="#b9bde0"/><rect x="3.8" y="1.2" width="1.8" height="1.8" fill="#b9bde0"/><rect x="1.2" y="3.8" width="1.8" height="1.8" fill="#b9bde0"/><rect x="3.8" y="3.8" width="1.8" height="1.8" fill="#b9bde0"/></svg>
<div class="tr" style="left:648px;top:279.90000000000003px;color:#444">yolo_v7_ethernet</div>
<svg class="a" style="left:638.6px;top:290.7px" width="7" height="7"><rect x="0" y="0" width="6.8" height="6.8" rx="0.6" fill="#5d6299"/><rect x="1.2" y="1.2" width="1.8" height="1.8" fill="#b9bde0"/><rect x="3.8" y="1.2" width="1.8" height="1.8" fill="#b9bde0"/><rect x="1.2" y="3.8" width="1.8" height="1.8" fill="#b9bde0"/><rect x="3.8" y="3.8" width="1.8" height="1.8" fill="#b9bde0"/></svg>
<div class="tr" style="left:648px;top:291.1px;color:#444">yolo_v7_pcie</div>
<svg class="a" style="left:628.3px;top:301.7px" width="7" height="7"><rect x="0.5" y="0.5" width="6" height="6" rx="1.2" fill="#fff" stroke="#c4c6ce" stroke-width="0.8"/><path d="M1.7 3.5 H5.3" stroke="#a6a8b2" stroke-width="0.8"/></svg>
<svg class="a" style="left:638.3px;top:302.2px" width="7" height="6"><path d="M0.3 0.8 H2.6 L3.3 1.6 H6.7 V5.6 H0.3 Z" fill="#c3c9ec"/></svg>
<div class="tr" style="left:647.3px;top:302.3px;color:#444">Pose Detection</div>
<svg class="a" style="left:638.6px;top:313.09999999999997px" width="7" height="7"><rect x="0" y="0" width="6.8" height="6.8" rx="0.6" fill="#5d6299"/><rect x="1.2" y="1.2" width="1.8" height="1.8" fill="#b9bde0"/><rect x="3.8" y="1.2" width="1.8" height="1.8" fill="#b9bde0"/><rect x="1.2" y="3.8" width="1.8" height="1.8" fill="#b9bde0"/><rect x="3.8" y="3.8" width="1.8" height="1.8" fill="#b9bde0"/></svg>
<div class="tr" style="left:648px;top:313.5px;color:#444">open_pose</div>
<div class="a" style="left:124px;top:476.5px;width:175px;height:116px;background:#fff;border-top:1px solid #e2e4ee;border-left:1px solid #e6e8f0"></div>
<div class="a" style="left:125px;top:477.5px;width:11.5px;height:115px;background:#fafafd;border-right:0.7px solid #e4e6ee"></div>
<div class="a" style="left:125px;top:492px;width:11px;height:0.7px;background:#e6e8ef"></div>
<div class="a" style="left:125px;top:508.2px;width:11px;height:0.7px;background:#e6e8ef"></div>
<div class="a" style="left:125px;top:523.3px;width:11px;height:0.7px;background:#e6e8ef"></div>
<div class="a" style="left:126.5px;top:481px;width:8.5px;height:7px;border-radius:3px;background:#22a24e"></div>
<div class="a" style="left:126.5px;top:497px;width:8.5px;height:7px;border-radius:3px;background:#6d8ee0"></div>
<div class="t" style="left:127px;top:514px;font-size:3.2px;color:#888">LOG</div>
<div class="a" style="left:130px;top:528px;width:2px;height:7px;background:#666;border-radius:1px"></div>
<div class="a" style="left:137px;top:477.5px;width:161px;height:11px;background:#f3f4f9"></div>
<div class="a" style="left:137px;top:477.5px;width:49px;height:11.5px;background:#fff"></div>
<div class="t" style="left:145px;top:480.5px;font-size:4.6px;color:#555;font-weight:bold">Application KPI</div>
<div class="t" style="left:142px;top:497.5px;font-size:5.2px;color:#777">Frames:</div>
<div class="a" style="left:166.3px;top:494.3px;width:22.7px;height:11.7px;background:#e3e5f0;border-radius:1.5px"></div>
<div class="t" style="left:170px;top:497.5px;font-size:5.4px;color:#666">3</div>
<div class="a" style="left:183.5px;top:496.5px"><svg width="4" height="7"><path d="M0.5 2 L2 0.3 L3.5 2Z M0.5 5 L2 6.7 L3.5 5Z" fill="#555"/></svg></div>
<div class="t" style="left:142.2px;top:517.9px;font-size:5.6px;color:#5a5a66">CVU</div>
<div class="t" style="left:142.2px;top:532.8px;font-size:5.6px;color:#5a5a66">APU</div>
<div class="t" style="left:142.2px;top:546.8px;font-size:5.6px;color:#5a5a66">MLA</div>
<div class="a" style="left:161px;top:513.3px;width:1.2px;height:43px;background:#b4b4bc"></div>
<div class="a" style="left:163px;top:527.7px;width:135px;height:1px;background-image:radial-gradient(circle,#b8b8c0 0.45px,transparent 0.6px);background-size:3.6px 1px"></div>
<div class="a" style="left:163px;top:542.1px;width:135px;height:1px;background-image:radial-gradient(circle,#b8b8c0 0.45px,transparent 0.6px);background-size:3.6px 1px"></div>
<div class="a" style="left:163px;top:556.7px;width:135px;height:1px;background-image:radial-gradient(circle,#b8b8c0 0.45px,transparent 0.6px);background-size:3.6px 1px"></div>
<div class="a" style="left:195.5px;top:515.2px;width:15.5px;height:10.6px;background:#8bc8f6"></div>
<div class="a" style="left:217.2px;top:515.2px;width:38.2px;height:10.6px;background:#8bc8f6"></div>
<div class="a" style="left:260.3px;top:515.2px;width:15.1px;height:10.6px;background:#8bc8f6"></div>
<div class="a" style="left:281.4px;top:515.2px;width:16.6px;height:10.6px;background:#8bc8f6"></div>
<div class="a" style="left:181px;top:530px;width:13.8px;height:10.6px;background:#9c8cf1"></div>
<div class="a" style="left:202.6px;top:530px;width:13.5px;height:10.6px;background:#9c8cf1"></div>
<div class="a" style="left:223.9px;top:530px;width:13.7px;height:10.6px;background:#9c8cf1"></div>
<div class="a" style="left:252.7px;top:530px;width:39.3px;height:10.6px;background:#9c8cf1"></div>
<div class="a" style="left:167px;top:544.8px;width:14.0px;height:10.4px;background:#fbc43e"></div>
<div class="a" style="left:188.1px;top:544.8px;width:14.0px;height:10.4px;background:#fbc43e"></div>
<div class="a" style="left:209.4px;top:544.8px;width:14.5px;height:10.4px;background:#fbc43e"></div>
<div class="a" style="left:165.1px;top:557px;width:0.8px;height:3.5px;background:#888"></div>
<div class="t" style="left:150.5px;top:562px;width:30px;text-align:center;font-size:5.6px;color:#707078">00.000</div>
<div class="a" style="left:201.1px;top:557px;width:0.8px;height:3.5px;background:#888"></div>
<div class="t" style="left:186.5px;top:562px;width:30px;text-align:center;font-size:5.6px;color:#707078">00.005</div>
<div class="a" style="left:236.6px;top:557px;width:0.8px;height:3.5px;background:#888"></div>
<div class="t" style="left:222px;top:562px;width:30px;text-align:center;font-size:5.6px;color:#707078">00.010</div>
<div class="a" style="left:272.8px;top:557px;width:0.8px;height:3.5px;background:#888"></div>
<div class="t" style="left:258.2px;top:562px;width:30px;text-align:center;font-size:5.6px;color:#707078">00.015</div>
<div class="a" style="left:2px;top:592px;width:815px;height:12px;background:#c8cce0"></div>
</div>
<div class="a dots2" style="left:833.8px;top:180.9px;width:430.4px;height:133.1px;overflow:hidden;filter:blur(0.25px)">
<div class="a" style="left:10.0px;top:22.3px;width:237.5px;height:77.8px;border:1.2px solid #c6cce4;background:rgba(242,244,252,0.85);border-radius:1.5px"></div>
<div class="t" style="left:128.8px;top:28.5px;font-size:5.6px;color:#333340;transform:translateX(-50%)">pose_detector</div>
<div class="node" style="left:18.7px;top:40.2px;width:54.9px;height:46.9px"><div class="lt" style="height:35.4px"></div><div class="st" style="background:#7fc3ef"></div></div>
<div class="ntx" style="left:24.4px;top:46.4px;font-size:4.85px;line-height:6.2px">simaai_generic_pre</div>
<div class="ntx" style="left:24.4px;top:52.6px;font-size:4.85px;line-height:6.2px">proc_1</div>
<div class="a" style="left:65.4px;top:43.9px;width:4.2px;height:4.2px;border-radius:50%;background:#3c3c48"></div>
<div class="node" style="left:101.3px;top:40.2px;width:54.8px;height:46.9px"><div class="lt" style="height:35.4px"></div><div class="st" style="background:#efbf45"></div></div>
<div class="ntx" style="left:106.8px;top:46.4px;font-size:4.85px;line-height:6.2px">simaai_process_ml</div>
<div class="ntx" style="left:106.8px;top:52.6px;font-size:4.85px;line-height:6.2px">a_1</div>
<div class="a" style="left:147.7px;top:43.9px;width:4.2px;height:4.2px;border-radius:50%;background:#3c3c48"></div>
<div class="node" style="left:183.4px;top:40.2px;width:55.4px;height:46.9px"><div class="lt" style="height:35.4px"></div><div class="st" style="background:#7fc3ef"></div></div>
<div class="ntx" style="left:189.0px;top:46.4px;font-size:4.85px;line-height:6.2px">simaai_openpose_p</div>
<div class="ntx" style="left:189.0px;top:52.6px;font-size:4.85px;line-height:6.2px">ostproc_1</div>
<div class="a" style="left:230.6px;top:43.9px;width:4.2px;height:4.2px;border-radius:50%;background:#3c3c48"></div>
<div class="node" style="left:261.0px;top:46.5px;width:64.1px;height:32.6px"><div class="lt" style="height:21.9px"></div><div class="st" style="background:#8a7fe0"></div></div>
<div class="ntx" style="left:266.7px;top:52.8px;font-size:4.85px;line-height:6.2px">simaai_group_key_point</div>
<div class="ntx" style="left:266.7px;top:59.0px;font-size:4.85px;line-height:6.2px">s_1</div>
<div class="a" style="left:316.8px;top:50.0px;width:4.2px;height:4.2px;border-radius:50%;background:#3c3c48"></div>
<div class="node" style="left:351.0px;top:85.9px;width:64.3px;height:32.8px"><div class="lt" style="height:22.0px"></div><div class="st" style="background:#8a7fe0"></div></div>
<div class="ntx" style="left:356.5px;top:92.4px;font-size:4.85px;line-height:6.2px">simaai_overlay2_1</div>
<div class="a" style="left:406.9px;top:90.0px;width:4.2px;height:4.2px;border-radius:50%;background:#3c3c48"></div>
<svg class="a" style="left:0.0px;top:0.0px" width="431" height="134"><polyline points="-0.8,97.6 6.7,97.6 6.7,64.0 18.7,64.0" fill="none" stroke="#6470b2" stroke-width="1.15"/><path d="M11.6,62.0 L15.6,64.0 L11.6,66.0 Z" fill="#3b4a9a"/><polyline points="73.6,64.0 101.3,64.0" fill="none" stroke="#6470b2" stroke-width="1.15"/><path d="M94.2,62.0 L98.2,64.0 L94.2,66.0 Z" fill="#3b4a9a"/><polyline points="156.1,64.0 183.4,64.0" fill="none" stroke="#6470b2" stroke-width="1.15"/><path d="M176.3,62.0 L180.3,64.0 L176.3,66.0 Z" fill="#3b4a9a"/><polyline points="238.8,63.8 261.0,63.8" fill="none" stroke="#6470b2" stroke-width="1.15"/><path d="M253.9,61.8 L257.9,63.8 L253.9,65.8 Z" fill="#3b4a9a"/><polyline points="325.1,63.4 337.3,63.4 337.3,96.3 351.0,96.3" fill="none" stroke="#6470b2" stroke-width="1.15"/><path d="M343.9,94.3 L347.9,96.3 L343.9,98.3 Z" fill="#3b4a9a"/><polyline points="-0.8,109.0 351.0,109.0" fill="none" stroke="#6470b2" stroke-width="1.15"/><path d="M343.9,107.0 L347.9,109.0 L343.9,111.0 Z" fill="#3b4a9a"/><polyline points="415.0,103.0 431.2,103.0" fill="none" stroke="#6470b2" stroke-width="1.15"/><circle cx="18.7" cy="64.0" r="2.8" fill="#26a48c"/><circle cx="18.7" cy="64.0" r="0.78" fill="#c8ebe2"/><circle cx="101.3" cy="64.0" r="2.8" fill="#26a48c"/><circle cx="101.3" cy="64.0" r="0.78" fill="#c8ebe2"/><circle cx="183.4" cy="64.0" r="2.8" fill="#26a48c"/><circle cx="183.4" cy="64.0" r="0.78" fill="#c8ebe2"/><circle cx="261.0" cy="63.8" r="2.8" fill="#26a48c"/><circle cx="261.0" cy="63.8" r="0.78" fill="#c8ebe2"/><circle cx="351.0" cy="96.3" r="2.8" fill="#26a48c"/><circle cx="351.0" cy="96.3" r="0.78" fill="#c8ebe2"/><circle cx="351.0" cy="109.0" r="2.8" fill="#26a48c"/><circle cx="351.0" cy="109.0" r="0.78" fill="#c8ebe2"/><circle cx="73.6" cy="64.0" r="2.3" fill="#fff" stroke="#5c5cc8" stroke-width="1.1"/><circle cx="156.1" cy="64.0" r="2.3" fill="#fff" stroke="#5c5cc8" stroke-width="1.1"/><circle cx="238.8" cy="63.8" r="2.3" fill="#fff" stroke="#5c5cc8" stroke-width="1.1"/><circle cx="325.1" cy="63.4" r="2.3" fill="#fff" stroke="#5c5cc8" stroke-width="1.1"/><circle cx="415.0" cy="103.0" r="2.3" fill="#fff" stroke="#5c5cc8" stroke-width="1.1"/></svg>
</div>
<div class="a" style="left:299px;top:391px;width:1001px;height:3px;background:#fff"></div>
<div class="a" style="left:299px;top:392px;width:998px;height:208px;background:#fff;border-left:1.5px solid #cfd1e4"></div>
<div class="a" style="left:300px;top:393.5px;width:997px;height:1.5px;background:#dcdee6"></div>
<div class="a" style="left:1297px;top:391px;width:3px;height:213px;background:#fdfdff"></div>
<div class="a" style="left:1297.3px;top:393px;width:1.6px;height:207px;background:#d6d8e2"></div>
<div class="a" style="left:299px;top:600px;width:1001px;height:4px;background:#c8cce0"></div>
<div class="a" style="left:300.5px;top:395px;width:21px;height:205px;background:#fcfcfe;border-right:1px solid #dfe1ec"></div>
<div class="a" style="left:300px;top:422px;width:21px;height:1px;background:#e2e4ee"></div>
<div class="a" style="left:300px;top:449.5px;width:21px;height:1px;background:#e2e4ee"></div>
<div class="a" style="left:300px;top:477px;width:21px;height:1px;background:#e2e4ee"></div>
<div class="a" style="left:303.5px;top:401.5px;width:14px;height:16px"><div class="a" style="left:2px;top:2px;width:1.2px;height:2px;background:#333"></div><div class="a" style="left:5px;top:1px;width:1.2px;height:3px;background:#333"></div><div class="a" style="left:8px;top:2px;width:1.2px;height:2px;background:#333"></div><div class="a" style="left:11px;top:1px;width:1.2px;height:3px;background:#333"></div><div class="a" style="left:0;top:4.5px;width:14px;height:6px;background:#1fa750;border-radius:1.5px"></div><div class="t" style="left:1.5px;top:5.3px;font-size:4.3px;color:#fff;font-weight:bold">APP</div><div class="a" style="left:2px;top:12px;width:1.3px;height:1.3px;background:#333"></div><div class="a" style="left:5px;top:12px;width:1.3px;height:1.3px;background:#333"></div><div class="a" style="left:8px;top:12px;width:1.3px;height:1.3px;background:#333"></div><div class="a" style="left:11px;top:12px;width:1.3px;height:1.3px;background:#333"></div></div>
<div class="a" style="left:303.5px;top:429px;width:14px;height:16px"><div class="a" style="left:2px;top:2px;width:1.2px;height:2px;background:#333"></div><div class="a" style="left:5px;top:1px;width:1.2px;height:3px;background:#333"></div><div class="a" style="left:8px;top:2px;width:1.2px;height:2px;background:#333"></div><div class="a" style="left:11px;top:1px;width:1.2px;height:3px;background:#333"></div><div class="a" style="left:0;top:4.5px;width:14px;height:6px;background:#4f79d8;border-radius:1.5px"></div><div class="t" style="left:1.5px;top:5.3px;font-size:4.3px;color:#fff;font-weight:bold">MOD</div><div class="a" style="left:2px;top:12px;width:1.3px;height:1.3px;background:#333"></div><div class="a" style="left:5px;top:12px;width:1.3px;height:1.3px;background:#333"></div><div class="a" style="left:8px;top:12px;width:1.3px;height:1.3px;background:#333"></div><div class="a" style="left:11px;top:12px;width:1.3px;height:1.3px;background:#333"></div></div>
<div class="t" style="left:304px;top:460.5px;font-size:5.2px;color:#666;font-weight:bold">LOG</div>
<div class="a" style="left:309px;top:483px"><svg width="5" height="12"><path d="M2.5 0 L5 3 L3.3 3 L3.3 9 L5 9 L2.5 12 L0 9 L1.7 9 L1.7 3 L0 3 Z" fill="#555a6e"/></svg></div>
<div class="a" style="left:322px;top:395px;width:975px;height:20px;background:#f5f6fa;border-bottom:1px solid #e4e6ef"></div>
<div class="a" style="left:322px;top:395px;width:89px;height:21px;background:#fff"></div>
<div class="t" style="left:336.5px;top:400px;font-size:8.5px;font-weight:bold;color:#3a3a48">Application KPI</div>
<div class="t" style="left:330.5px;top:430px;font-size:9.8px;color:#555766">Frames:</div>
<div class="a" style="left:374px;top:424.5px;width:41.5px;height:22px;background:#e3e5f0;border-radius:3px"></div>
<div class="t" style="left:381px;top:431px;font-size:10px;color:#333">3</div>
<div class="a" style="left:404px;top:429px"><svg width="6" height="13"><path d="M0.5 3.5 L3 0.5 L5.5 3.5 Z" fill="#444"/><path d="M0.5 9.5 L3 12.5 L5.5 9.5 Z" fill="#444"/></svg></div>
<div class="t" style="left:331.5px;top:467.5px;font-size:10px;color:#3f4150">CVU</div>
<div class="t" style="left:331.5px;top:493.5px;font-size:10px;color:#3f4150">APU</div>
<div class="t" style="left:331.5px;top:519.5px;font-size:10px;color:#3f4150">MLA</div>
<div class="a" style="left:365.2px;top:459.3px;width:1.1px;height:77.5px;background:#6a6a70"></div>
<div class="a" style="left:368px;top:484.4px;width:644px;height:2px;background-image:radial-gradient(circle,#6a6a6a 0.75px,transparent 1px);background-size:6.05px 2px;background-position:2px 0"></div>
<div class="a" style="left:368px;top:510.5px;width:644px;height:2px;background-image:radial-gradient(circle,#6a6a6a 0.75px,transparent 1px);background-size:6.05px 2px;background-position:2px 0"></div>
<div class="a" style="left:368px;top:537.0px;width:644px;height:2px;background-image:radial-gradient(circle,#6a6a6a 0.75px,transparent 1px);background-size:6.05px 2px;background-position:2px 0"></div>
<div class="a" style="left:374.8px;top:538px;width:1.1px;height:7px;background:#666"></div>
<div class="t" style="left:345.3px;top:546px;width:60px;text-align:center;font-size:10.6px;color:#4f5160">00.000</div>
<div class="a" style="left:454.2px;top:538px;width:1.1px;height:7px;background:#666"></div>
<div class="t" style="left:424.8px;top:546px;width:60px;text-align:center;font-size:10.6px;color:#4f5160">00.005</div>
<div class="a" style="left:533.7px;top:538px;width:1.1px;height:7px;background:#666"></div>
<div class="t" style="left:504.2px;top:546px;width:60px;text-align:center;font-size:10.6px;color:#4f5160">00.010</div>
<div class="a" style="left:613.2px;top:538px;width:1.1px;height:7px;background:#666"></div>
<div class="t" style="left:583.7px;top:546px;width:60px;text-align:center;font-size:10.6px;color:#4f5160">00.015</div>
<div class="a" style="left:692.6px;top:538px;width:1.1px;height:7px;background:#666"></div>
<div class="t" style="left:663.2px;top:546px;width:60px;text-align:center;font-size:10.6px;color:#4f5160">00.020</div>
<div class="a" style="left:772.1px;top:538px;width:1.1px;height:7px;background:#666"></div>
<div class="t" style="left:742.7px;top:546px;width:60px;text-align:center;font-size:10.6px;color:#4f5160">00.025</div>
<div class="a" style="left:851.6px;top:538px;width:1.1px;height:7px;background:#666"></div>
<div class="t" style="left:822.1px;top:546px;width:60px;text-align:center;font-size:10.6px;color:#4f5160">00.030</div>
<div class="a" style="left:931.0px;top:538px;width:1.1px;height:7px;background:#666"></div>
<div class="t" style="left:901.6px;top:546px;width:60px;text-align:center;font-size:10.6px;color:#4f5160">00.035</div>
<div class="a" style="left:1010.5px;top:538px;width:1.1px;height:7px;background:#666"></div>
<div class="t" style="left:950.6px;top:546px;width:60px;text-align:right;font-size:10.6px;color:#4f5160">00.040</div>
<div class="a" style="left:376.0px;top:462.8px;width:29.6px;height:19.3px;background:#8bc8f6"></div>
<div class="a" style="left:423.7px;top:462.8px;width:119.5px;height:19.3px;background:#8bc8f6"></div>
<div class="a" style="left:550.7px;top:462.8px;width:29.5px;height:19.3px;background:#8bc8f6"></div>
<div class="a" style="left:598.4px;top:462.8px;width:119.6px;height:19.3px;background:#8bc8f6"></div>
<div class="a" style="left:726.1px;top:462.8px;width:28.5px;height:19.3px;background:#8bc8f6"></div>
<div class="a" style="left:773.1px;top:462.8px;width:120.1px;height:19.3px;background:#8bc8f6"></div>
<div class="bl" style="left:374.8px;top:474.1px">Pre-<span style="color:#f03030">#1</span></div>
<div class="bl" style="left:460.8px;top:474.1px">Post-<span style="color:#f03030">#1</span></div>
<div class="bl" style="left:550.3px;top:474.1px">Pre-#2</div>
<div class="bl" style="left:637.0px;top:474.1px">Post-#2</div>
<div class="bl" style="left:726.1px;top:474.1px">Pre-#3</div>
<div class="bl" style="left:812.7px;top:474.1px">Post-#3</div>
<div class="a" style="left:535.1px;top:488.8px;width:55.3px;height:19.3px;background:#9c8cf1"></div>
<div class="a" style="left:598.4px;top:488.8px;width:28.5px;height:19.3px;background:#9c8cf1"></div>
<div class="a" style="left:709.5px;top:488.8px;width:55.3px;height:19.3px;background:#9c8cf1"></div>
<div class="a" style="left:773.3px;top:488.8px;width:28.1px;height:19.3px;background:#9c8cf1"></div>
<div class="a" style="left:884.3px;top:488.8px;width:55.6px;height:19.3px;background:#9c8cf1"></div>
<div class="a" style="left:947.9px;top:488.8px;width:28.2px;height:19.3px;background:#9c8cf1"></div>
<div class="bl" style="left:532.7px;top:500.1px">keypoint-<span style="color:#f03030">#1</span></div>
<div class="bl" style="left:600.2px;top:500.1px">overlay-<span style="color:#f03030">#1</span></div>
<div class="bl" style="left:705.7px;top:500.1px">keypoint-#2</div>
<div class="bl" style="left:773.3px;top:500.1px">overlay-#2</div>
<div class="bl" style="left:878.9px;top:500.1px">keypoint-#3</div>
<div class="bl" style="left:946.5px;top:500.1px">overlay-#3</div>
<div class="a" style="left:392.5px;top:515px;width:30.1px;height:19.2px;background:#fbc43e"></div>
<div class="a" style="left:567.1px;top:515px;width:30.3px;height:19.2px;background:#fbc43e"></div>
<div class="a" style="left:742.0px;top:515px;width:29.9px;height:19.2px;background:#fbc43e"></div>
<div class="bl" style="left:389.9px;top:526.2px">MLA-<span style="color:#f03030">#1</span></div>
<div class="bl" style="left:565.0px;top:526.2px">MLA-#2</div>
<div class="bl" style="left:739.5px;top:526.2px">MLA-#3</div>
<div class="a" style="left:1225px;top:427.5px;width:60.5px;height:16px;border:1px solid #eceef3;border-radius:2px;background:#fff"></div>
<div class="a" style="left:1232px;top:431px;width:0;height:0;border-left:7px solid #9fe0e0;border-top:4.5px solid transparent;border-bottom:4.5px solid transparent"></div>
<div class="t" style="left:1243px;top:431px;font-size:10px;color:#b8bad6">Live KPI</div>
<div class="a" style="left:1279px;top:400px;width:10px;height:10px"><svg width="10" height="10"><path d="M1.5 1.5 L5 5 L8.5 1.5" stroke="#55576e" stroke-width="1.4" fill="none"/><path d="M1 8.5 H9" stroke="#55576e" stroke-width="1.4"/></svg></div>
<div class="a" style="left:1033.5px;top:459.3px;width:257px;height:133.7px;background:#eef1fb;border-radius:6px"></div>
<div class="t" style="left:1044px;top:472px;font-size:12.4px;color:#34364a">Full pipeline</div>
<div class="t" style="left:1044px;top:500px;font-size:12px;color:#34364a">APU</div>
<div class="t" style="left:1044px;top:522.6px;font-size:12px;color:#34364a">CVU</div>
<div class="t" style="left:1044px;top:545.4px;font-size:12px;color:#34364a">MLA</div>
<div class="t" style="left:1164px;top:472px;width:100px;text-align:right;font-size:12px;color:#34364a">78.95 FPS</div>
<div class="t" style="left:1164px;top:500px;width:100px;text-align:right;font-size:12px;color:#34364a">181.79 FPS</div>
<div class="t" style="left:1164px;top:522.6px;width:100px;text-align:right;font-size:12px;color:#34364a">104.05 FPS</div>
<div class="t" style="left:1164px;top:545.4px;width:100px;text-align:right;font-size:12px;color:#34364a">490.44 FPS</div>
<div class="a" style="left:1273.5px;top:474px"><svg width="8" height="6"><path d="M1 4.5 L4 1.5 L7 4.5" stroke="#55576e" stroke-width="1.2" fill="none"/></svg></div>
<svg class="a" style="left:0;top:0" width="1300" height="604"><defs><clipPath id="blk"><path d="M817,0 H1300 V391 H817 Z M833.8,180.9 V314 H1264.2 V180.9 Z" clip-rule="evenodd"/></clipPath></defs><line x1="746.1" y1="471.9" x2="871.5" y2="255.9" stroke="#2020f4" stroke-width="1.9" stroke-dasharray="5.5 4.4"/><path d="M875.5,249 L874.8,259.0 L871.4,256.1 L867.2,254.6 Z" fill="#2020f4"/><line x1="764.1" y1="521.1" x2="950.6" y2="252.9" stroke="#ff9b1c" stroke-width="1.9" stroke-dasharray="5.5 4.4"/><path d="M955.2,246.3 L953.7,256.2 L950.5,253.0 L946.4,251.2 Z" fill="#ff9b1c"/><line x1="861" y1="465.4" x2="1030.2" y2="261.1" stroke="#2020f4" stroke-width="1.9" stroke-dasharray="5.5 4.4"/><path d="M1035.3,254.9 L1032.9,264.6 L1030.1,261.2 L1026.2,259.0 Z" fill="#2020f4"/><line x1="919.4" y1="491.7" x2="1118.4" y2="257.4" stroke="#a21ff0" stroke-width="1.9" stroke-dasharray="5.5 4.4"/><path d="M1123.6,251.3 L1121.1,261.0 L1118.3,257.5 L1114.4,255.3 Z" fill="#a21ff0"/><line x1="966.7" y1="485.7" x2="1201.8" y2="294.3" stroke="#a21ff0" stroke-width="1.9" stroke-dasharray="5.5 4.4"/><path d="M1208,289.2 L1203.8,298.3 L1201.6,294.4 L1198.2,291.5 Z" fill="#a21ff0"/><g clip-path="url(#blk)"><line x1="746.1" y1="471.9" x2="875.5" y2="249" stroke="#2020f4" stroke-width="3.8" stroke-linecap="round" stroke-dasharray="4.5 5.4"/><line x1="764.1" y1="521.1" x2="955.2" y2="246.3" stroke="#ff9b1c" stroke-width="3.8" stroke-linecap="round" stroke-dasharray="4.5 5.4"/><line x1="861" y1="465.4" x2="1035.3" y2="254.9" stroke="#2020f4" stroke-width="3.8" stroke-linecap="round" stroke-dasharray="4.5 5.4"/><line x1="919.4" y1="491.7" x2="1123.6" y2="251.3" stroke="#a21ff0" stroke-width="3.8" stroke-linecap="round" stroke-dasharray="4.5 5.4"/><line x1="966.7" y1="485.7" x2="1208" y2="289.2" stroke="#a21ff0" stroke-width="3.8" stroke-linecap="round" stroke-dasharray="4.5 5.4"/></g></svg>
</body></html>
